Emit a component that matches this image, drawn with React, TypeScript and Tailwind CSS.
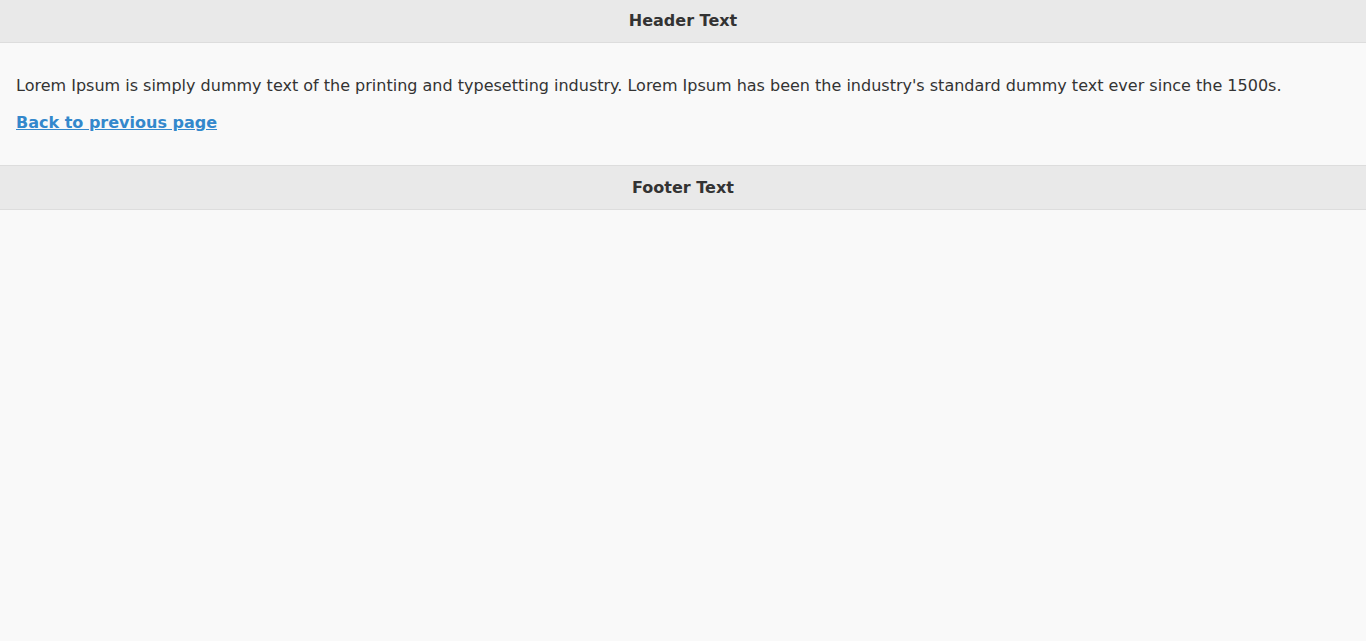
export default function App() {
    return (
        <div className="min-h-[641px] bg-[#f9f9f9] text-[#333] font-['DejaVu_Sans',sans-serif] text-base">
            <div className="h-[43px] bg-[#e9e9e9] border-b border-[#dddddd] flex items-center justify-center">
                <h1 className="font-bold text-base leading-[20px]">Header Text</h1>
            </div>

            <div className="p-4">
                <p className="my-4 leading-[21px]">
                    Lorem Ipsum is simply dummy text of the printing and typesetting industry. Lorem Ipsum has been the industry's standard dummy text ever since the 1500s.
                </p>
                <p className="my-4 leading-[21px]">
                    <a href="#" className="font-bold text-[#3388cc] underline">Back to previous page</a>
                </p>
            </div>

            <div className="h-[45px] bg-[#e9e9e9] border-y border-[#dddddd] flex items-center justify-center">
                <h4 className="font-bold text-base leading-[20px]">Footer Text</h4>
            </div>
        </div>
    );
}
